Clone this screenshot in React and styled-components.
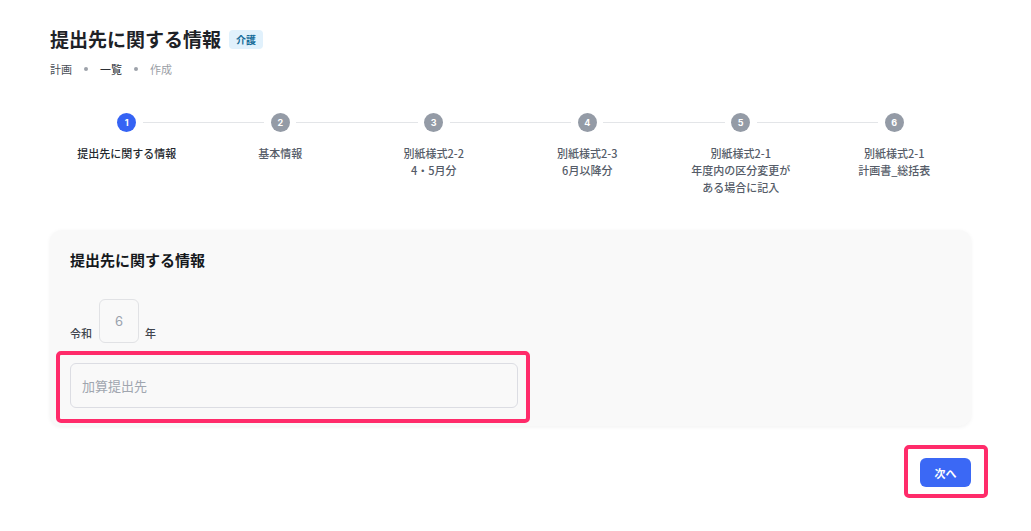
import React from "react";
import styled, { createGlobalStyle } from "styled-components";

const steps = [
  { label: ["提出先に関する情報"] },
  { label: ["基本情報"] },
  { label: ["別紙様式2-2", "4・5月分"] },
  { label: ["別紙様式2-3", "6月以降分"] },
  { label: ["別紙様式2-1", "年度内の区分変更が", "ある場合に記入"] },
  { label: ["別紙様式2-1", "計画書_総括表"] },
];

const App = () => {
  const current = 0;
  return (
    <Page>
      <GlobalStyle />
      <Header>
        <Title>提出先に関する情報</Title>
        <Badge>介護</Badge>
      </Header>
      <Breadcrumb>
        <Crumb>計画</Crumb>
        <Dot />
        <Crumb strong>一覧</Crumb>
        <Dot />
        <Crumb muted>作成</Crumb>
      </Breadcrumb>

      <Stepper>
        {steps.map((s, i) => (
          <Step key={i} last={i === steps.length - 1}>
            <Circle active={i === current}>{i + 1}</Circle>
            <StepLabel active={i === current}>
              {s.label.map((l) => (
                <div key={l}>{l}</div>
              ))}
            </StepLabel>
          </Step>
        ))}
      </Stepper>

      <Card>
        <CardTitle>提出先に関する情報</CardTitle>
        <YearRow>
          <SmallLabel>令和</SmallLabel>
          <YearInput defaultValue="6" />
          <SmallLabel>年</SmallLabel>
        </YearRow>
        <Highlight>
          <TextInput placeholder="加算提出先" />
        </Highlight>
      </Card>

      <Footer>
        <Highlight tight>
          <NextButton>次へ</NextButton>
        </Highlight>
      </Footer>
    </Page>
  );
};

export default App;

const GlobalStyle = createGlobalStyle`
  body {
    margin: 0;
    background: #ffffff;
    font-family: "Noto Sans CJK JP", "Noto Sans", sans-serif;
    color: #1f2328;
  }
`;

const Page = styled.div`
  width: 1031px;
  height: 531px;
  box-sizing: border-box;
  padding: 25px 60px 0 50px;
`;

const Header = styled.div`
  display: flex;
  align-items: center;
  gap: 8px;
`;

const Title = styled.h1`
  margin: 0;
  font-size: 19px;
  line-height: 28px;
  font-weight: 700;
  color: #1e2227;
`;

const Badge = styled.span`
  background: #e1f1fc;
  color: #166c99;
  font-size: 10px;
  font-weight: 700;
  line-height: 14px;
  padding: 3px 7px 2px;
  border-radius: 4px;
`;

const Breadcrumb = styled.div`
  display: flex;
  align-items: center;
  gap: 11px;
  margin-top: 8px;
  font-size: 11px;
  line-height: 16px;
`;

const Crumb = styled.span`
  color: ${(p) => (p.muted ? "#9a9ea5" : p.strong ? "#2b2f35" : "#4a4f57")};
`;

const Dot = styled.span`
  width: 4px;
  height: 4px;
  border-radius: 50%;
  background: #9da2aa;
  margin: 0 1px;
`;

const Stepper = styled.div`
  display: grid;
  grid-template-columns: repeat(6, 1fr);
  margin-top: 36px;
`;

const Step = styled.div`
  position: relative;
  display: flex;
  flex-direction: column;
  align-items: center;
  &::after {
    content: "";
    display: ${(p) => (p.last ? "none" : "block")};
    position: absolute;
    top: 9px;
    height: 1px;
    left: calc(50% + 16px);
    right: calc(-50% + 16px);
    background: #e3e5e8;
  }
`;

const Circle = styled.div`
  width: 19px;
  height: 19px;
  border-radius: 50%;
  background: ${(p) => (p.active ? "#3563f4" : "#949ba6")};
  color: #ffffff;
  font-family: "Inter", "Noto Sans", sans-serif;
  font-size: 9px;
  font-weight: 700;
  display: flex;
  align-items: center;
  justify-content: center;
`;

const StepLabel = styled.div`
  margin-top: 13px;
  text-align: center;
  font-size: 11px;
  line-height: 17px;
  font-weight: 500;
  color: ${(p) => (p.active ? "#23272d" : "#555c68")};
`;

const Card = styled.div`
  margin-top: 34px;
  background: #f9f9f9;
  border-radius: 12px;
  box-shadow: 0 1px 4px rgba(0, 0, 0, 0.06);
  padding: 19px 20px 18px 20px;
`;

const CardTitle = styled.h2`
  margin: 0;
  font-size: 15px;
  line-height: 22px;
  font-weight: 700;
  color: #16191d;
`;

const YearRow = styled.div`
  display: flex;
  align-items: flex-end;
  gap: 6px;
  margin-top: 28px;
`;

const SmallLabel = styled.span`
  font-size: 11px;
  line-height: 16px;
  font-weight: 500;
  color: #40454d;
  padding-bottom: 2px;
  margin-right: 1px;
`;

const YearInput = styled.input`
  width: 40px;
  height: 44px;
  box-sizing: border-box;
  border: 1px solid #e1e2e5;
  border-radius: 6px;
  background: #f9f9f9;
  text-align: center;
  font-size: 13px;
  color: #9aa2ae;
  font-family: "Inter", "Noto Sans", sans-serif;
  padding-bottom: 2px;
  outline: none;
`;

const Highlight = styled.div`
  position: relative;
  margin-top: ${(p) => (p.tight ? "0" : "20px")};
  &::before {
    content: "";
    position: absolute;
    top: ${(p) => (p.tight ? "-13px" : "-12px")};
    bottom: ${(p) => (p.tight ? "-11px" : "-15px")};
    left: ${(p) => (p.tight ? "-16px" : "-14px")};
    right: ${(p) => (p.tight ? "-17px" : "-12px")};
    border: 4px solid #ff2b6a;
    border-radius: 5px;
    pointer-events: none;
  }
  ${(p) => (p.tight ? "" : "width: 448px;")}
`;

const TextInput = styled.input`
  width: 448px;
  height: 45px;
  box-sizing: border-box;
  border: 1px solid #dcdde3;
  border-radius: 6px;
  background: #f9f9f9;
  padding: 0 11px;
  font-size: 13px;
  font-family: "Noto Sans CJK JP", "Noto Sans", sans-serif;
  outline: none;
  &::placeholder {
    color: #a0a6af;
  }
`;

const Footer = styled.div`
  display: flex;
  justify-content: flex-end;
  margin-top: 32px;
  padding-right: 0;
`;

const NextButton = styled.button`
  display: block;
  width: 51px;
  height: 29px;
  border: none;
  border-radius: 6px;
  background: #3b68f5;
  color: #ffffff;
  font-family: "Noto Sans CJK JP", "Noto Sans", sans-serif;
  font-size: 11px;
  font-weight: 700;
`;
